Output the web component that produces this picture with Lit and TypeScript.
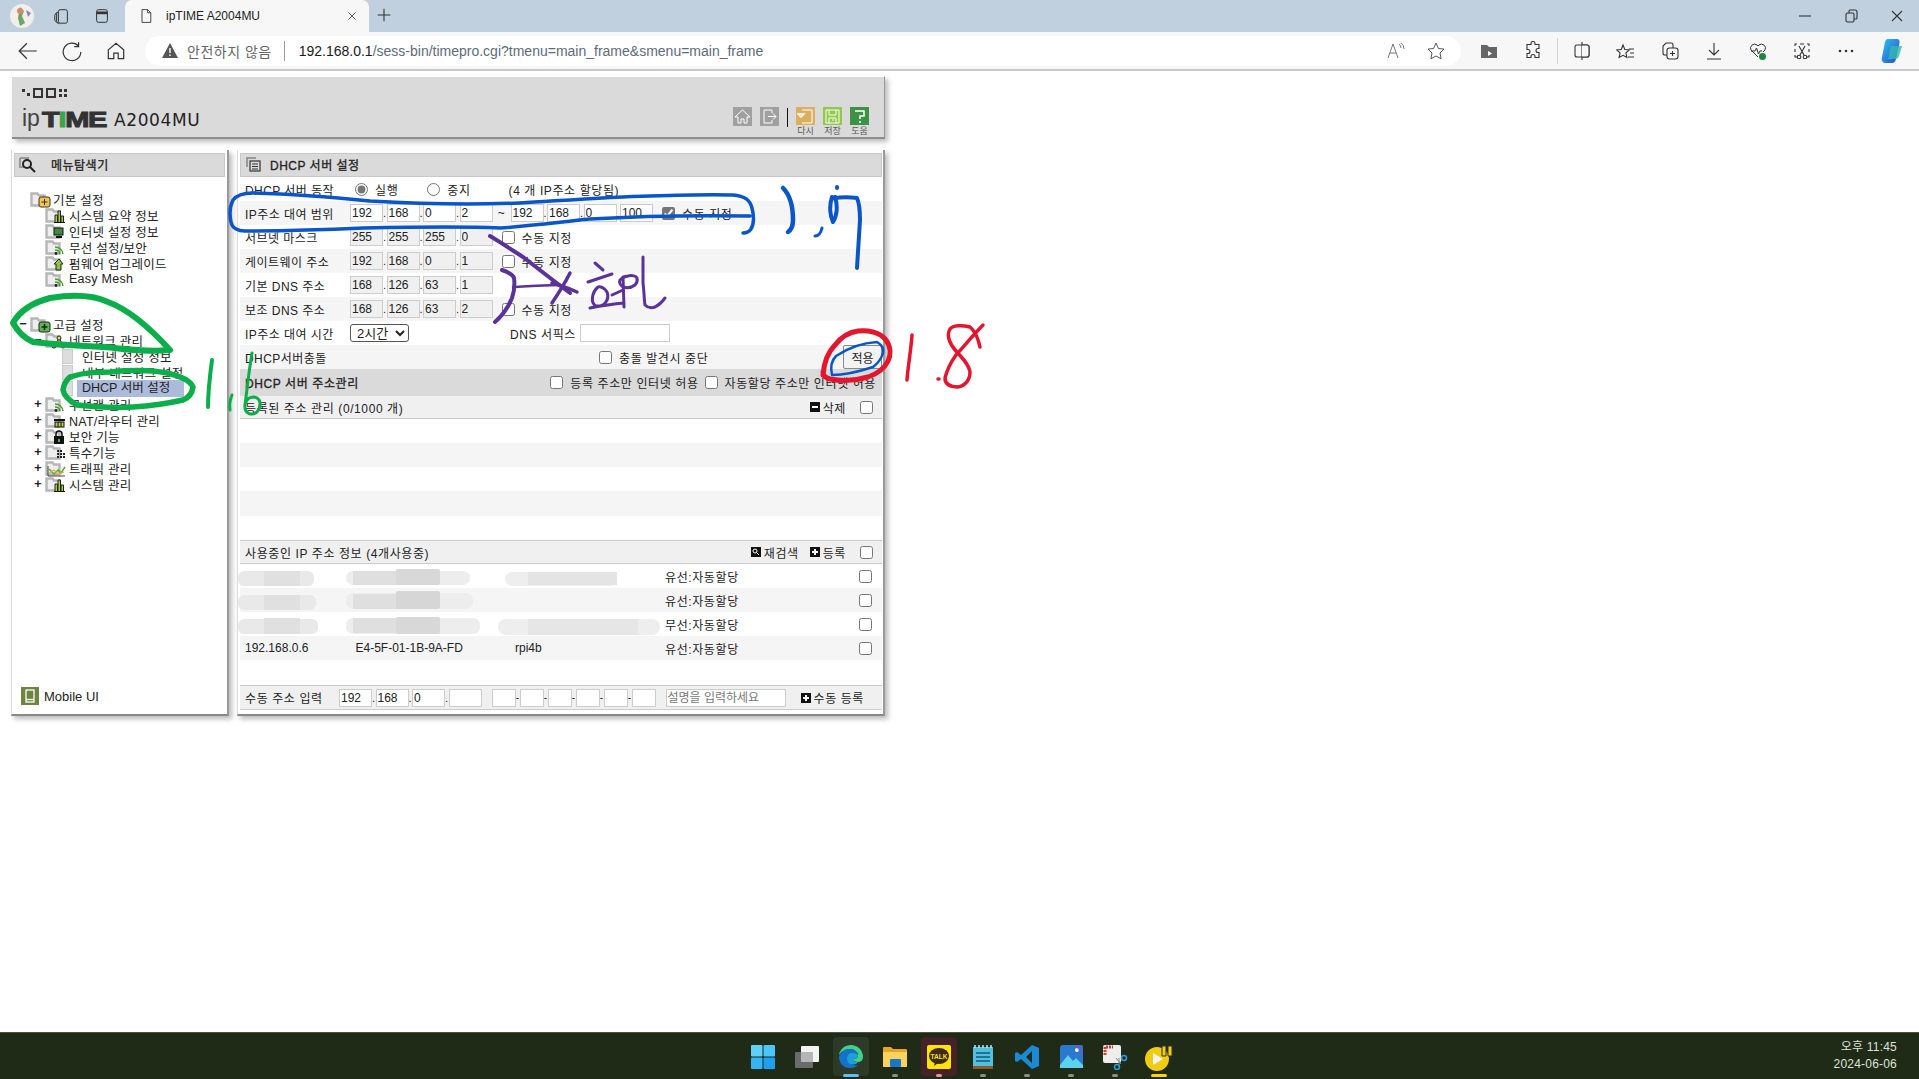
import { LitElement, css, html, svg } from 'lit';
import { customElement } from 'lit/decorators.js';

const ico = (body: unknown, w = 20, h = 20, vb = '0 0 20 20') =>
  html`<svg width=${w} height=${h} viewBox=${vb} fill="none" stroke="#333" stroke-width="1.1">${body}</svg>`;

const folder = (fill = '#eeeeee') => svg`
  <path d="M1.500 2.500h6l1.500 2h5.500v10H1.500z" fill=${fill} stroke="#b6b6b6" stroke-width="2.400"/>`;

const glyphs: Record<string, unknown> = {
  plusY: svg`<rect x="9" y="6" width="11" height="10" rx="2" fill="#f6c64a" stroke="#333"/><path d="M14.500 8v6M11.500 11h6" stroke="#333"/>`,
  plusG: svg`<rect x="9" y="6" width="11" height="10" rx="2" fill="#58b94a" stroke="#222"/><path d="M14.500 8v6M11.500 11h6" stroke="#222" stroke-width="1.600"/>`,
  bars: svg`<path d="M10 15V8h2.500v7M13 15V4h2.500v11M16 15V9h2.500v6" fill="#a6cf3e" stroke="#222"/><path d="M9 15.500h11" stroke="#111"/>`,
  monitor: svg`<rect x="9" y="5" width="9" height="7" fill="#3e8a43" stroke="#111"/><path d="M11 14h6" stroke="#111" stroke-width="2"/>`,
  wifi: svg`<path d="M10 8a8 8 0 0 1 8 7M10 11a5 5 0 0 1 5 4" stroke="#4d9a32" stroke-width="1.500"/><circle cx="11" cy="14.500" r="1.400" fill="#222" stroke="none"/>`,
  up: svg`<path d="M14 4l4 5h-2v6h-5V9H9z" fill="#8bc53f" stroke="#222"/>`,
  net: svg`<circle cx="14" cy="6" r="2" fill="#f5d36a" stroke="#222"/><circle cx="9" cy="14" r="2" fill="#f5d36a" stroke="#222"/><circle cx="18" cy="14" r="2" fill="#f5d36a" stroke="#222"/><path d="M13 8l-3 4M15 8l3 4M11 14h5" stroke="#222"/>`,
  router: svg`<path d="M9 8h11" stroke="#111" stroke-width="2"/><rect x="10" y="10" width="9" height="5" fill="#b7d04a" stroke="#111"/><path d="M13 10v5M16 10v5" stroke="#111"/>`,
  lock: svg`<rect x="9" y="8" width="10" height="8" fill="#111" stroke="none"/><path d="M11 8V6a3 3 0 0 1 6 0v2" stroke="#111" stroke-width="1.500"/><rect x="13.200" y="11" width="1.600" height="3" fill="#6c6" stroke="none"/>`,
  dots: svg`<path d="M12 7h2M15 7h2M12 10h2M15 10h2M18 10h2M12 13h2M15 13h2M18 13h2" stroke="#222" stroke-width="2"/>`,
  graph: svg`<path d="M3 6v10h17" stroke="#444"/><path d="M4 9l5 5 4-4 3 3 4-6" stroke="#5aa834" stroke-width="1.500"/><path d="M4 13l5-3 4 4 6-2" stroke="#e4ad39" stroke-width="1.200"/>`
};

const treeIcon = (g: string) =>
  html`<svg class="ti" width="22" height="17" viewBox="0 0 22 17" fill="none">${folder()}${glyphs[g]}</svg>`;

const tree: { t: string; d: number; g?: string; m?: string; sel?: boolean; gapTop?: boolean }[] = [
  { t: '기본 설정', d: 0, g: 'plusY' },
  { t: '시스템 요약 정보', d: 1, g: 'bars' },
  { t: '인터넷 설정 정보', d: 1, g: 'monitor' },
  { t: '무선 설정/보안', d: 1, g: 'wifi' },
  { t: '펌웨어 업그레이드', d: 1, g: 'up' },
  { t: 'Easy Mesh', d: 1, g: 'wifi' },
  { t: '고급 설정', d: 0, g: 'plusG', m: '−', gapTop: true },
  { t: '네트워크 관리', d: 1, g: 'net', m: '−' },
  { t: '인터넷 설정 정보', d: 2 },
  { t: '내부 네트워크 설정', d: 2 },
  { t: 'DHCP 서버 설정', d: 2, sel: true },
  { t: '무선랜 관리', d: 1, g: 'wifi', m: '+' },
  { t: 'NAT/라우터 관리', d: 1, g: 'router', m: '+' },
  { t: '보안 기능', d: 1, g: 'lock', m: '+' },
  { t: '특수기능', d: 1, g: 'dots', m: '+' },
  { t: '트래픽 관리', d: 1, g: 'graph', m: '+' },
  { t: '시스템 관리', d: 1, g: 'bars', m: '+' }
];

const ink = (d: string, color: string, w: number) =>
  svg`<path d=${d} fill="none" stroke=${color} stroke-width=${w} stroke-linecap="round" stroke-linejoin="round"/>`;

// blurred-out address rows: x, y, w, h, radius, fill
const smears: [number, number, number, number, number, string][] = [
  [238, 571, 76, 15, 6, '#e9e9e9'], [264, 571, 36, 15, 0, '#e0e0e0'],
  [346, 571, 124, 14, 7, '#ededed'], [353, 571, 58, 14, 0, '#dfdfdf'], [396, 569, 44, 16, 2, '#d8d8d8'],
  [505, 572, 112, 14, 7, '#eeeeee'], [528, 572, 89, 13, 0, '#e4e4e4'],
  [238, 595, 78, 15, 6, '#e9e9e9'], [264, 595, 36, 15, 0, '#e0e0e0'],
  [346, 593, 127, 16, 7, '#ededed'], [353, 594, 58, 15, 0, '#dfdfdf'], [396, 591, 44, 18, 2, '#d6d6d6'],
  [238, 619, 80, 15, 6, '#e9e9e9'], [264, 618, 36, 16, 0, '#e0e0e0'],
  [346, 618, 134, 16, 7, '#ededed'], [353, 618, 58, 15, 0, '#dfdfdf'], [396, 617, 44, 17, 2, '#d8d8d8'],
  [498, 619, 162, 16, 8, '#eeeeee'], [528, 619, 110, 16, 0, '#e6e6e6']
];

@customElement('app-root')
export class AppRoot extends LitElement {
  static override styles = css`
    :host {
      display: block;
      position: relative;
      width: 1919px;
      height: 1079px;
      overflow: hidden;
      background: #fff;
      font: 12px 'Liberation Sans', 'Noto Sans CJK KR', sans-serif;
      color: #222;
    }
    .page { display: flex; flex-direction: column; height: 1079px; }

    .tabs { height: 32px; background: #c0d0df; display: flex; align-items: center; flex: none; }
    .tabs .ic { width: 42px; display: flex; justify-content: center; }
    .avatar { margin-left: 1px; }
    .tab {
      margin-left: 2px; width: 244px; height: 32px; background: #f7f7f7; border-radius: 7px 7px 0 0;
      display: flex; align-items: center; padding: 0 10px 0 13px; box-sizing: border-box; gap: 12px; font-size: 12px;
    }
    .tab span { flex: 1; color: #222; }
    .newtab { margin-left: 6px; }
    .winbtns { margin-left: auto; display: flex; gap: 26px; padding-right: 12px; }

    .bar { height: 39px; box-sizing: border-box; background: #f7f7f7; border-bottom: 2px solid #c9c9c9; display: flex; align-items: center; flex: none; padding-left: 17px; }
    .nav { display: flex; gap: 22px; width: 128px; }
    .addr {
      width: 1316px; height: 30px; background: #fff; border-radius: 15px; display: flex; align-items: center;
      box-sizing: border-box; padding-left: 16px; font-size: 14px;
    }
    .warn-t { color: #666; margin-left: 8px; font-size: 14px; letter-spacing: .5px; }
    .sep { width: 1px; height: 20px; background: #999; margin: 0 14px 0 12px; }
    .host { color: #1a1a1a; }
    .path { color: #5d6b7a; }
    .addr-r { margin-left: auto; display: flex; gap: 20px; padding-right: 15px; }
    .tools { display: flex; align-items: center; margin-left: 18px; gap: 24px; }
    .tsep { width: 1px; height: 26px; background: #d5d5d5; margin: 0 -10px; }

    .content { flex: 1; padding: 5px 0 0 11px; }
    .head {
      margin-left: 1px; width: 873px; height: 63px; box-sizing: border-box; background: #dadada;
      border-top: 1px solid #fff; border-right: 1px solid #999; border-bottom: 2px solid #8c8c8c;
      box-shadow: 3px 3px 5px #bbb; display: flex; justify-content: space-between; padding: 10px 15px 0 10px;
    }
    .logo-dots { display: flex; align-items: center; gap: 3px; height: 11px; }
    .d { background: #333; width: 3px; height: 3px; }
    .sq { border: 2px solid #333; width: 6px; height: 6px; }
    .grid4 { display: grid; grid-template-columns: 3px 3px; gap: 2px; }
    .logo { display: flex; align-items: flex-end; margin-top: 10px; height: 20px; white-space: nowrap; }
    .ip { font-size: 23px; line-height: 20px; color: #444; width: 20px; }
    .time {
      font-size: 22px; font-weight: 700; line-height: 17px; color: #333; width: 72px; display: block;
      transform: scaleX(1.32); transform-origin: left; -webkit-text-stroke: 1px #333; letter-spacing: -1px;
    }
    .time i { font-style: normal; color: #3fa34d; -webkit-text-stroke: 1px #3fa34d; }
    .model { font: 17px 'DejaVu Sans', sans-serif; color: #222; line-height: 15px; letter-spacing: .6px; }
    .hbtns { display: flex; gap: 8px; margin-top: 20px; }
    .hb { width: 19px; display: flex; flex-direction: column; align-items: center; font-size: 9px; color: #555; line-height: 11px; white-space: nowrap; }
    .hb div { width: 19px; height: 19px; display: flex; align-items: center; justify-content: center; margin-bottom: 1px; }
    .vs { width: 1px; height: 19px; background: #111; margin: 1px 0 0 0; }

    .cols { display: flex; gap: 8px; margin-top: 11px; }
    .side, .main {
      height: 566px; box-sizing: border-box; background: #fff; border-right: 2px solid #999; border-bottom: 2px solid #888;
      border-left: 1px solid #ddd; box-shadow: 3px 3px 5px #bbb; padding: 3px 2px 0;
    }
    .side { width: 218px; display: flex; flex-direction: column; }
    .main { width: 648px; padding: 3px 1px 0 2px; }
    .title {
      height: 24px; background: #dadada; border: 1px solid #c8c8c8; box-sizing: border-box; display: flex; align-items: center;
      -webkit-text-stroke: .3px #222; letter-spacing: .5px; padding-bottom: 1px;
    }
    .side .title { padding-left: 4px; gap: 15px; }
    .main .title { padding-left: 5px; gap: 9px; }
    .tree { margin-top: 14px; flex: 1; padding-left: 16px; font-size: 12.5px; letter-spacing: .25px; }
    .node { display: flex; align-items: center; height: 16px; position: relative; white-space: nowrap; }
    .node.gap { margin-top: 29px; }
    .node .mark { width: 12px; text-align: center; font-weight: 700; position: absolute; line-height: 14px; }
    .node.d0 .mark { left: -13px; }
    .node.d1 .mark { left: 2px; }
    .node.d1 { padding-left: 15px; }
    .node.d2 { padding-left: 32px; }
    .node .lbl { margin-left: 1px; }
    .node.d1 .lbl { margin-left: 2px; }
    .node.d2 .lbl { margin-left: 0; padding-left: 5px; }
    .stub { width: 11px; height: 15px; background: #ddd; border: 1px solid #ccc; box-sizing: border-box; margin-right: 4px; flex: none; }
    .node .sel { background: #adbbdb; width: 107px; box-sizing: border-box; height: 17px; line-height: 17px; letter-spacing: 0; }
    .mobile { display: flex; align-items: center; gap: 5px; margin: 0 0 9px 7px; font-size: 13px; }
    .mi { width: 18px; height: 18px; background: #6e8542; display: flex; align-items: center; justify-content: center; }

    .row { height: 24px; display: flex; align-items: center; padding-left: 5px; white-space: nowrap; letter-spacing: .6px; }
    .row.alt { background: #f5f5f5; }
    .label { width: 105px; flex: none; letter-spacing: .45px; }
    .strong { -webkit-text-stroke: .3px #222; }
    .ips { display: flex; align-items: center; letter-spacing: 0; }
    .ips b { width: 3.500px; font-weight: 400; text-align: left; line-height: 22px; font-size: 11px; }
    input[type='text'] {
      width: 33px; height: 18px; box-sizing: border-box; padding: 0 0 0 1px; font: inherit; color: #222;
      border: 1px solid #ccc; border-radius: 0; background: #fff; outline: none;
    }
    input.off { background: #f0f0f0; }
    input[type='checkbox'], input[type='radio'] { margin: 0; width: 13px; height: 13px; flex: none; accent-color: #767676; }
    .cb { margin-left: 9px !important; margin-right: 7px !important; }
    .tilde { width: 18px; text-align: center; }
    select { width: 59px; height: 18px; font: 13px 'Liberation Sans', 'Noto Sans CJK KR', sans-serif; padding: 0 0 0 2px; border: 1px solid #555; border-radius: 3px; background: #fff; color: #222; }
    .apply {
      width: 39px; height: 24px; box-sizing: border-box; border: 1px solid #888; border-radius: 2px;
      background: #f3f3f3; font: inherit; padding: 0; color: #222;
    }
    .right { margin-left: auto; display: flex; align-items: center; }
    .sub { background: #dadada; height: 27px; }
    .gray { background: #f0f0f0; border-bottom: 1px solid #ccc; box-sizing: border-box; }
    .gray.top { border-top: 1px solid #ccc; }
    .act { display: flex; align-items: center; gap: 3px; }
    .sq-i { width: 10px; height: 10px; background: #111; position: relative; flex: none; }
    .sq-i::before { content: ''; position: absolute; left: 2px; right: 2px; top: 4px; height: 2px; background: #fff; }
    .sq-i.p::after { content: ''; position: absolute; top: 2px; bottom: 2px; left: 4px; width: 2px; background: #fff; }
    .data span { flex: none; letter-spacing: 0; }
    .c1 { width: 110.500px; }
    .c2 { width: 159.500px; }
    .c3 { width: 150px; }
    .data .c4 { width: 194px; letter-spacing: .6px; }
    .spacer { height: 25px; }
    .spacer.sm { height: 24px; }
    .spacer.alt { background: #f5f5f5; }
    .macs { display: flex; align-items: center; margin-left: 10px; letter-spacing: 0; }
    .macs input { width: 24px; }
    .macs b { width: 4px; font-weight: 400; font-size: 10px; text-align: center; }
    .desc { width: 120px !important; margin-left: 10px; font-size: 12px; }
    .desc::placeholder { color: #777; }

    .task { height: 47px; background: #1f2a17; border-top: 1px solid #4a5342; flex: none; display: flex; align-items: center; box-sizing: border-box; }
    .icons { display: flex; margin-left: 741px; }
    .ti-b { width: 44px; height: 39px; display: flex; align-items: center; justify-content: center; position: relative; margin-top: 1px; }
    .ti-b.on { background: #2d3a27; border-radius: 4px; width: 36px; margin: 1px 4px 0; }
    .ti-b.k { background: #452227; border-radius: 4px; width: 36px; margin: 1px 4px 0; }
    .ti-b::after { content: ''; position: absolute; bottom: -1px; left: 50%; width: 6px; height: 3px; margin-left: -3px; border-radius: 2px; background: #8a8f86; }
    .ti-b.on::after { width: 16px; margin-left: -8px; background: #5cc0f5; }
    .ti-b.k::after { background: #ef8fa0; }
    .ti-b.y::after { width: 16px; margin-left: -8px; background: #f4d90a; }
    .ti-b.n::after { display: none; }
    .clock { margin-left: auto; padding-right: 22px; text-align: right; color: #dfe3da; line-height: 17px; font-size: 12px; letter-spacing: .2px; }

    .ink { position: absolute; left: 0; top: 0; pointer-events: none; }
  `;

  private ips(vals: string[], off = false) {
    return html`<div class="ips">
      ${vals.map(
        (v, i) => html`${i ? html`<b>.</b>` : ''}<input type="text" class=${off ? 'off' : ''} .value=${v} readonly />`
      )}
    </div>`;
  }

  private tabStrip() {
    return html`<div class="tabs">
      <div class="ic avatar">
        <svg width="26" height="26" viewBox="0 0 26 26">
          <circle cx="13" cy="13" r="12" fill="#f2efe9" />
          <path d="M11 4l4 4-2 5 3 7-5 3-2-8z" fill="#6aa56d" />
          <circle cx="11" cy="8" r="3" fill="#d8876c" />
          <path d="M17 7l5 3-3 4z" fill="#8c7fc9" />
        </svg>
      </div>
      <div class="ic" style="width:38px">
        ${ico(svg`<path d="M8 3h6a2 2 0 0 1 2 2v11a2 2 0 0 1-2 2H8a2 2 0 0 1-2-2V5a2 2 0 0 1 2-2z"/><path d="M6 5L4 7v9l3 3M4 6L2 9v6l3 3"/>`, 18, 18)}
      </div>
      <div class="ic">
        ${ico(svg`<rect x="4" y="3" width="12" height="14" rx="2"/><path d="M4 6.500h12" stroke-width="3"/>`, 18, 18)}
      </div>
      <div class="tab">
        ${ico(svg`<path d="M5 2h7l4 4v12H5z"/><path d="M12 2v4h4"/>`, 16, 16)}
        <span>ipTIME A2004MU</span>
        ${ico(svg`<path d="M5 5l10 10M15 5L5 15"/>`, 14, 14)}
      </div>
      <div class="newtab">${ico(svg`<path d="M10 3v14M3 10h14" stroke-width="1.200"/>`, 18, 18)}</div>
      <div class="winbtns">
        ${ico(svg`<path d="M4 10h12"/>`, 20, 20)}
        ${ico(svg`<rect x="5" y="7" width="8" height="9" rx="1.500"/><path d="M8 7V5a1 1 0 0 1 1-1h5a2 2 0 0 1 2 2v6a1 1 0 0 1-1 1h-2"/>`, 20, 20)}
        ${ico(svg`<path d="M5 5l10 10M15 5L5 15"/>`, 20, 20)}
      </div>
    </div>`;
  }

  private toolbar() {
    return html`<div class="bar">
      <div class="nav">
        ${ico(svg`<path d="M18 10H3M9 3l-7 7 7 7"/>`, 22, 22)}
        ${ico(svg`<path d="M16 5.500A8 8 0 1 0 18 11M16 2v4h-4"/>`, 22, 22)}
        ${ico(svg`<path d="M3 9l7-6 7 6v8h-5v-5H8v5H3z"/>`, 22, 22)}
      </div>
      <div class="addr">
        <svg width="18" height="17" viewBox="0 0 18 17"><path d="M9 1l8 15H1z" fill="#555" /><path d="M9 6v5M9 12.500v1.500" stroke="#fff" stroke-width="1.400" /></svg>
        <span class="warn-t">안전하지 않음</span>
        <span class="sep"></span>
        <span class="host">192.168.0.1</span><span class="path">/sess-bin/timepro.cgi?tmenu=main_frame&amp;smenu=main_frame</span>
        <div class="addr-r">
          <svg width="20" height="20" viewBox="0 0 20 20" fill="none" stroke="#777"><path d="M2 17L7 3l5 14M4 12h6M13 3a5 5 0 0 1 2 4M15 2a7 7 0 0 1 3 6"/></svg>
          <svg width="20" height="20" viewBox="0 0 20 20" fill="none" stroke="#555"><path d="M10 2l2.500 5.500 5.500.6-4 3.900 1.100 5.800L10 15l-5.100 2.800L6 12 2 8.100l5.500-.6z"/></svg>
        </div>
      </div>
      <div class="tools">
        <svg width="20" height="20" viewBox="0 0 20 20"><path d="M2 4h6l2 2h8v11H2z" fill="#666" /><path d="M9 10l4 2.500-4 2.500z" fill="#fff" /></svg>
        ${ico(svg`<path d="M8 3a2 2 0 0 1 4 0v1h4v4h-1a2 2 0 0 0 0 4h1v5h-4v-1a2 2 0 0 0-4 0v1H4v-4h1a2 2 0 0 0 0-4H4V4h4z" transform="translate(0 -.5)"/>`)}
        <span class="tsep"></span>
        ${ico(svg`<rect x="3" y="4" width="14" height="12" rx="2"/><path d="M10 1v18"/><path d="M10 4h5a2 2 0 0 1 2 2v8a2 2 0 0 1-2 2h-5" fill="#f7f7f7"/>`)}
        ${ico(svg`<path d="M7 2l1.800 4.500 4.500.4-3.400 3 1 4.600L7 12.300l-3.900 2.200 1-4.600-3.400-3 4.500-.4z" transform="translate(0 2)"/><path d="M13 8h5M14 12h4M12 16h6"/>`)}
        ${ico(svg`<rect x="7" y="7" width="11" height="11" rx="2.500"/><path d="M12.500 10v5M10 12.500h5M7 14H5a2 2 0 0 1-2-2V5l3-3h5a2 2 0 0 1 2 2v3"/>`)}
        ${ico(svg`<path d="M10 2v12M5 9l5 5 5-5M3 18h14"/>`)}
        <svg width="20" height="20" viewBox="0 0 20 20" fill="none" stroke="#333"><path d="M10 16L3 9a4 4 0 0 1 6-5l1 1 1-1a4 4 0 0 1 6 5l-2 2" /><path d="M3 10h4l1.500-3 2 6 1.500-3h2" /><circle cx="14.500" cy="15.500" r="3.500" fill="#1b8a3a" stroke="none" /></svg>
        ${ico(svg`<path d="M3 5V3h2M8 3h4M15 3h2v2M17 8v3M3 8v3M3 14v2h3M17 14v2h-3" /><path d="M7 5l5 9M13 5l-5 9" /><circle cx="7" cy="16" r="1.800" /><circle cx="13" cy="16" r="1.800" />`)}
        <svg width="20" height="20" viewBox="0 0 20 20"><circle cx="4" cy="10" r="1.300" fill="#333" /><circle cx="10" cy="10" r="1.300" fill="#333" /><circle cx="16" cy="10" r="1.300" fill="#333" /></svg>
        <svg width="24" height="26" viewBox="0 0 24 26">
          <defs><linearGradient id="cp" x1="0" y1="0" x2="1" y2="1"><stop offset="0" stop-color="#29c5e8" /><stop offset=".55" stop-color="#2a7fe0" /><stop offset="1" stop-color="#1a50c0" /></linearGradient></defs>
          <path d="M8 1h9c2 0 3 2 2.500 4L16 21c-.5 2.500-2 4-4 4H6c-3 0-5-2-4-6L5 4c.5-2 1.500-3 3-3z" fill="url(#cp)" />
          <path d="M11 8h11l-3 10c-.5 2-2 3-4 3H8z" fill="#35b9ad" opacity=".8" />
        </svg>
      </div>
    </div>`;
  }

  private header() {
    return html`<div class="head">
      <div>
        <div class="logo-dots">
          <span class="d" style="margin-bottom:4px"></span><span class="d" style="margin:4px 0 0 -1px"></span>
          <span class="sq"></span><span class="sq"></span>
          <span class="grid4"><span class="d"></span><span class="d"></span><span class="d"></span><span class="d"></span></span>
        </div>
        <div class="logo">
          <span class="ip">ip</span>
          <span class="time">T<i>I</i>ME</span>
          <span class="model">A2004MU</span>
        </div>
      </div>
      <div class="hbtns">
        <div class="hb"><div style="background:#a0a0a0">
          <svg width="17" height="17" viewBox="0 0 17 17" fill="none" stroke="#fff"><path d="M1 9l7.500-7L16 9h-3v6H10v-4H7v4H4V9z" /></svg>
        </div></div>
        <div class="hb"><div style="background:#a0a0a0">
          <svg width="17" height="17" viewBox="0 0 17 17" fill="none" stroke="#fff"><path d="M11 5V2H3v13h8v-3M7 8.500h8M12 5.500l3 3-3 3" /></svg>
        </div></div>
        <span class="vs"></span>
        <div class="hb"><div style="background:#dbaf5f">
          <svg width="17" height="17" viewBox="0 0 17 17" fill="none" stroke="#fff"><path d="M5 2h10v13H5" /><path d="M1 6h6M4 9L1 6h6z" stroke-width="1.500" /></svg>
        </div>다시</div>
        <div class="hb"><div style="background:#93c84a">
          <svg width="17" height="17" viewBox="0 0 17 17" fill="none" stroke="#fff"><path d="M2 2h13v13H2zM5 2v5h7V2M5 15v-5h7v5M8 12h2" /></svg>
        </div>저장</div>
        <div class="hb"><div style="background:#3c9245">
          <svg width="17" height="17" viewBox="0 0 17 17" fill="none" stroke="#fff" stroke-width="1.500"><path d="M4 3h9v5H9v3M9 13v2" /></svg>
        </div>도움</div>
      </div>
    </div>`;
  }

  private sidebar() {
    return html`<div class="side">
      <div class="title">
        <svg width="17" height="17" viewBox="0 0 17 17" fill="none"><path d="M1 2h8v2h0M1 2v9h4" stroke="#999" stroke-width="2" /><circle cx="8" cy="8" r="4" stroke="#222" stroke-width="2" /><path d="M11 11l5 5" stroke="#222" stroke-width="2" /></svg>
        <span>메뉴탐색기</span>
      </div>
      <div class="tree">
        ${tree.map(
          (n) => html`<div class="node d${n.d} ${n.gapTop ? 'gap' : ''}">
            ${n.m ? html`<span class="mark">${n.m}</span>` : ''}
            ${n.g ? treeIcon(n.g) : html`<span class="stub"></span>`}
            <span class="lbl ${n.sel ? 'sel' : ''}">${n.t}</span>
          </div>`
        )}
      </div>
      <div class="mobile">
        <span class="mi"><svg width="10" height="14" viewBox="0 0 10 14" fill="none" stroke="#fff" stroke-width="1.300"><rect x="1" y="1" width="8" height="12" /><path d="M1 10.500h8" /></svg></span>
        <span>Mobile UI</span>
      </div>
    </div>`;
  }

  private settings() {
    const manual = html`<input type="checkbox" class="cb" /><span>수동 지정</span>`;
    return html`
      <div class="row">
        <span class="label">DHCP 서버 동작</span>
        <input type="radio" name="r" checked style="margin-left:5px" /><span style="margin-left:7px">실행</span>
        <input type="radio" name="r" style="margin-left:29px" /><span style="margin-left:7px">중지</span>
        <span style="margin-left:38px">(4 개 IP주소 할당됨)</span>
      </div>
      <div class="row alt">
        <span class="label">IP주소 대여 범위</span>
        ${this.ips(['192', '168', '0', '2'])}
        <span class="tilde">~</span>
        ${this.ips(['192', '168', '0', '100'])}
        <input type="checkbox" checked style="margin-left:9px;margin-right:7px" /><span>수동 지정</span>
      </div>
      <div class="row">
        <span class="label">서브넷 마스크</span>${this.ips(['255', '255', '255', '0'], true)}${manual}
      </div>
      <div class="row alt">
        <span class="label">게이트웨이 주소</span>${this.ips(['192', '168', '0', '1'], true)}${manual}
      </div>
      <div class="row">
        <span class="label">기본 DNS 주소</span>${this.ips(['168', '126', '63', '1'], true)}
      </div>
      <div class="row alt">
        <span class="label">보조 DNS 주소</span>${this.ips(['168', '126', '63', '2'], true)}${manual}
      </div>
      <div class="row">
        <span class="label">IP주소 대여 시간</span>
        <select><option>2시간</option></select>
        <span style="margin-left:101px;width:70px">DNS 서픽스</span>
        <input type="text" style="width:90px" />
      </div>
      <div class="row alt">
        <span class="label">DHCP서버충돌</span>
        <input type="checkbox" style="margin-left:249px;margin-right:7px" /><span>충돌 발견시 중단</span>
        <div class="right"><button class="apply">적용</button></div>
      </div>
    `;
  }

  private addressTable() {
    const rows = [
      ['', '', '', '유선:자동할당'],
      ['', '', '', '유선:자동할당'],
      ['', '', '', '무선:자동할당'],
      ['192.168.0.6', 'E4-5F-01-1B-9A-FD', 'rpi4b', '유선:자동할당']
    ];
    return html`
      <div class="row sub">
        <span class="strong">DHCP 서버 주소관리</span>
        <div class="right">
          <input type="checkbox" style="margin-right:7px" /><span>등록 주소만 인터넷 허용</span>
          <input type="checkbox" style="margin:0 7px 0 6px" /><span style="margin-right:6px">자동할당 주소만 인터넷 허용</span>
        </div>
      </div>
      <div class="row gray" style="height:23px">
        <span>등록된 주소 관리 (0/1000 개)</span>
        <div class="right">
          <span class="act"><i class="sq-i"></i>삭제</span>
          <input type="checkbox" style="margin:0 9px 0 14px" />
        </div>
      </div>
      <div class="spacer sm"></div>
      <div class="spacer sm alt"></div>
      <div class="spacer sm"></div>
      <div class="spacer alt"></div>
      <div class="spacer sm"></div>
      <div class="row gray top">
        <span>사용중인 IP 주소 정보 (4개사용중)</span>
        <div class="right">
          <span class="act">
            <svg width="10" height="10" viewBox="0 0 10 10"><rect width="10" height="10" fill="#111" /><circle cx="4" cy="4" r="2" fill="none" stroke="#fff" /><path d="M5.500 5.500L8 8" stroke="#fff" /></svg>재검색
          </span>
          <span class="act" style="margin-left:11px"><i class="sq-i p"></i>등록</span>
          <input type="checkbox" style="margin:0 9px 0 14px" />
        </div>
      </div>
      ${rows.map(
        (r, i) => html`<div class="row data ${i % 2 ? 'alt' : ''}">
          <span class="c1">${r[0]}</span><span class="c2">${r[1]}</span><span class="c3">${r[2]}</span><span class="c4">${r[3]}</span>
          <input type="checkbox" />
        </div>`
      )}
      <div class="spacer"></div>
      <div class="row gray top" style="height:25px">
        <span style="width:94px;flex:none">수동 주소 입력</span>
        ${this.ips(['192', '168', '0', ''])}
        <div class="macs">
          ${[0, 1, 2, 3, 4, 5].map((i) => html`${i ? html`<b>-</b>` : ''}<input type="text" />`)}
        </div>
        <input type="text" class="desc" placeholder="설명을 입력하세요" />
        <span class="act" style="margin-left:15px"><i class="sq-i p"></i>수동 등록</span>
      </div>
    `;
  }

  private taskbar() {
    return html`<div class="task">
      <div class="icons">
        <div class="ti-b n">
          <svg width="24" height="24" viewBox="0 0 24 24"><g fill="#35b4f4"><rect width="11.500" height="11.500" rx="1" fill="#5fd0fb" /><rect x="12.500" width="11.500" height="11.500" rx="1" fill="#4cc6fa" /><rect y="12.500" width="11.500" height="11.500" rx="1" /><rect x="12.500" y="12.500" width="11.500" height="11.500" rx="1" fill="#1f9ff0" /></g></svg>
        </div>
        <div class="ti-b n">
          <svg width="24" height="24" viewBox="0 0 24 24"><rect x="6" y="1" width="18" height="16" rx="1" fill="#f3f3f3" /><rect y="7" width="18" height="16" rx="1" fill="#6b6b6b" /><rect x="6" y="7" width="12" height="10" fill="#b5b5b5" /></svg>
        </div>
        <div class="ti-b on">
          <svg width="26" height="26" viewBox="0 0 26 26"><path d="M13 1a12 12 0 0 1 12 12c0 3-2 5-5 5-3 0-5-1-5-3 3 0 5-1 5-4 0-3-4-6-8-6-5 0-9 3-11 6C2 5 7 1 13 1z" fill="#3fd089" /><path d="M1 13c1-5 6-8 10-8 5 0 9 3 9 6-3-3-8-3-10 0-2 4 1 9 5 10 2 .5 4 .5 5 0-2 2-4 3-7 3C6 25 1 19 1 13z" fill="#1572c8" /><path d="M10 11c2-3 7-3 10 0 0 3-2 4-5 4 0 2 2 3 5 3-2 3-6 3-8 2-3-2-4-6-2-9z" fill="#1c9fdc" /></svg>
        </div>
        <div class="ti-b">
          <svg width="24" height="23" viewBox="0 0 24 23"><path d="M0 3a1 1 0 0 1 1-1h7l2 2h13a1 1 0 0 1 1 1v16a1 1 0 0 1-1 1H1a1 1 0 0 1-1-1z" fill="#e5a823" /><path d="M0 7h24v14a1 1 0 0 1-1 1H1a1 1 0 0 1-1-1z" fill="#fbd25d" /><rect x="7" y="14" width="11" height="8" rx="1" fill="#1578c8" /></svg>
        </div>
        <div class="ti-b k">
          <svg width="24" height="24" viewBox="0 0 24 24"><rect width="24" height="24" rx="2" fill="#fee500" /><ellipse cx="12" cy="11" rx="10" ry="8" fill="#3b2a1d" /><path d="M8 17l-1 4 4-3z" fill="#3b2a1d" /><text x="12" y="13.500" text-anchor="middle" font-size="6.500" font-weight="700" font-family="Liberation Sans" fill="#fee500">TALK</text></svg>
        </div>
        <div class="ti-b">
          <svg width="20" height="24" viewBox="0 0 20 24"><rect y="2" width="20" height="21" fill="#53bfe0" /><rect y="21" width="20" height="3" fill="#8a5a2b" /><path d="M3 8h14M3 12h14M3 16h14" stroke="#155a78" stroke-width="1.500" /><path d="M2 0v3M6 0v3M10 0v3M14 0v3M18 0v3" stroke="#bde8f5" stroke-width="1.500" /></svg>
        </div>
        <div class="ti-b">
          <svg width="24" height="24" viewBox="0 0 24 24"><path d="M17 0l7 3v18l-7 3L6 14l-4 3-2-1V8l2-1 4 3zM17 6l-6 6 6 6z" fill="#1a8ad6" /></svg>
        </div>
        <div class="ti-b">
          <svg width="23" height="23" viewBox="0 0 23 23"><rect width="23" height="23" rx="3" fill="#2a78cf" /><path d="M0 20l8-10 5 6 3-3 7 7v3H0z" fill="#5ad2f0" /><circle cx="17" cy="5" r="2" fill="#fff" /><path d="M14 0h9v12z" fill="#7b52c9" opacity=".4" /></svg>
        </div>
        <div class="ti-b">
          <svg width="26" height="26" viewBox="0 0 26 26"><rect x="1" y="1" width="18" height="18" rx="2" fill="#eee" /><path d="M3 11V3h8" stroke="#d63a22" stroke-width="3" stroke-dasharray="2 1" fill="none" /><path d="M14 14l5 6M17 14v9" stroke="#888" /><circle cx="22" cy="14" r="2.500" fill="none" stroke="#2b9fdc" stroke-width="1.500" /><circle cx="15" cy="23" r="2.500" fill="none" stroke="#2b9fdc" stroke-width="1.500" /></svg>
        </div>
        <div class="ti-b y">
          <svg width="28" height="28" viewBox="0 0 28 28"><circle cx="12" cy="16" r="12" fill="#f0cc12" /><path d="M8 10l10 6-10 6z" fill="#f4f4f4" /><path d="M17 3h4v10h-4zM23 3h4v10h-4z" fill="#f0cc12" stroke="#333" /></svg>
        </div>
      </div>
      <div class="clock">오후 11:45<br />2024-06-06</div>
    </div>`;
  }

  private inkLayer() {
    const green = '#0cae4b';
    const blue = '#0a55c8';
    const purple = '#5a3299';
    const red = '#e3152f';
    return html`<svg class="ink" width="1919" height="1079" viewBox="0 0 1919 1079">
      ${smears.map(([x, y, w, h, r, f]) => svg`<rect x=${x} y=${y} width=${w} height=${h} rx=${r} fill=${f}/>`)}
      ${ink('M13 323C20 310 35 302 50 298C75 294 95 296 108 302C130 310 150 328 170 350C150 352 133 350 115 348C90 346 60 345 33 342C24 338 18 332 13 323Z', green, 6)}
      ${ink('M70 377C85 372 98 372 110 372C130 370 150 370 167 373C180 376 190 380 193 387C192 394 188 398 183 400C165 404 150 406 133 407C115 408 95 407 77 405C68 400 64 396 63 390C64 384 66 380 70 377', green, 5.500)}
      ${ink('M212 360C210 375 208 392 208 407', green, 4)}
      ${ink('M232 395C230 400 229 405 230 410', green, 3)}
      ${ink('M252 353C249 370 247 390 245 405C244 414 252 416 257 412C262 406 261 398 254 397C250 397 247 399 246 402', green, 3)}

      ${ink('M750 216C690 215 640 216 590 219C560 222 530 226 500 228C460 226 410 227 363 228C320 230 280 231 245 231C238 231 232 228 231 222C229 213 230 206 233 200C238 194 245 193 252 193C290 194 330 197 370 201C420 204 470 205 520 203C570 200 610 197 650 196C680 195 710 194 733 195C745 196 750 200 752 208C754 216 754 224 751 229C749 232 746 233 743 233', blue, 3.500)}
      ${ink('M783 188C790 195 793 208 793 220C793 226 791 230 788 232', blue, 4.500)}
      ${ink('M822 228C821 233 818 236 815 236', blue, 3)}
      ${ink('M837 187L837 188', blue, 4)}
      ${ink('M832 197C829 206 830 216 833 222C837 216 838 206 835 197M834 198C842 197 850 197 857 198C860 205 860 212 860 220C859 235 858 252 857 268', blue, 4)}
      ${ink('M832 375C830 366 832 360 836 356C845 350 860 343 877 342C882 345 884 349 883 353C881 360 877 364 873 367M832 375C845 375 858 372 873 367', blue, 2.500)}

      ${ink('M823 375C824 362 828 352 835 345C842 336 850 332 858 331C868 330 880 332 886 340C891 347 891 355 888 361C884 369 877 374 868 377C855 381 840 381 830 379C826 378 823 376 823 372', red, 5)}
      ${ink('M912 335C911 350 908 366 907 380', red, 3.500)}
      ${ink('M938 379L939 379', red, 3.500)}
      ${ink('M980 347C978 338 975 331 970 327C962 325 953 325 950 329C946 336 950 344 956 351C962 358 969 364 970 372C970 380 965 386 958 387C950 387 945 384 945 378C947 370 951 362 956 355C965 345 975 333 983 325', red, 3.500)}

      ${ink('M490 236C505 245 515 252 523 257C540 270 555 282 570 293', purple, 4)}
      ${ink('M502 270C508 272 513 274 514 278C515 285 514 292 512 298C508 308 502 316 495 322', purple, 4)}
      ${ink('M513 287C530 286 545 285 560 285', purple, 2.500)}
      ${ink('M570 273C565 283 558 294 552 303M552 283C560 285 570 289 577 292', purple, 3.500)}
      ${ink('M595 263L603 270M588 282L612 274M598 287C592 292 590 303 596 306C604 307 610 300 607 292C605 288 600 286 598 287M623 277L624 307M612 295L623 290M590 308C600 306 612 304 624 303', purple, 3)}
      ${ink('M620 280C622 278 625 276 628 276C632 275 636 276 637 278C638 282 636 284 635 285C631 288 626 288 623 287C620 285 619 282 620 280M643 257C643 268 643 276 643 283C644 290 644 298 645 305C648 308 652 308 655 307C659 305 662 302 665 298', purple, 3)}
    </svg>`;
  }

  override render() {
    return html`<div class="page">
        ${this.tabStrip()} ${this.toolbar()}
        <div class="content">
          ${this.header()}
          <div class="cols">
            ${this.sidebar()}
            <div class="main">
              <div class="title">
                <svg width="15" height="15" viewBox="0 0 15 15" fill="none" stroke="#333" stroke-width="1.200"><path d="M1 10V1h9" stroke="#999" stroke-width="2" /><rect x="4" y="4" width="10" height="10" /><path d="M6 7h6M6 9.500h6M6 12h6" /></svg>
                <span>DHCP 서버 설정</span>
              </div>
              ${this.settings()} ${this.addressTable()}
            </div>
          </div>
        </div>
        ${this.taskbar()}
      </div>
      ${this.inkLayer()}`;
  }
}
